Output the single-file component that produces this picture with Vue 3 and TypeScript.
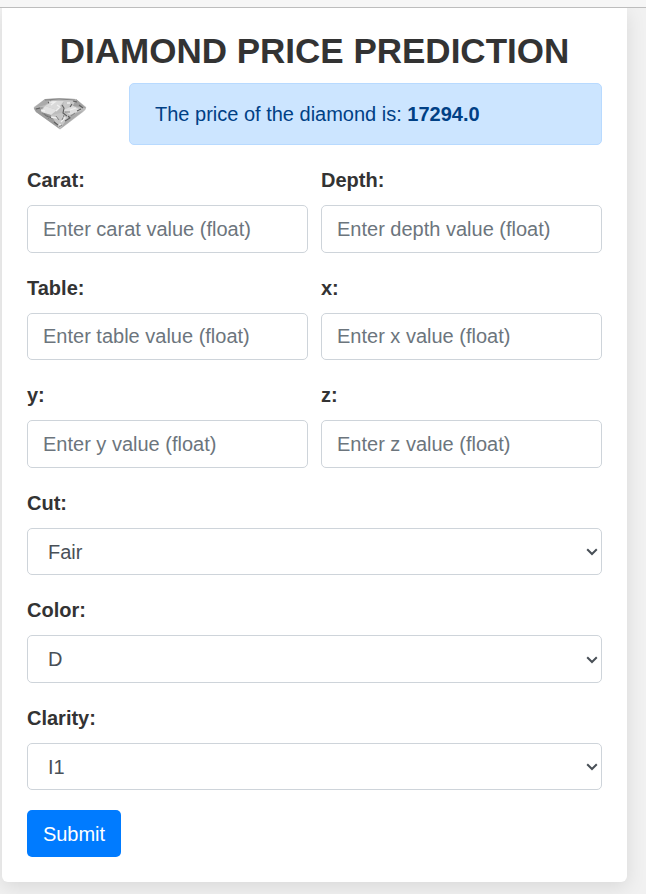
<script setup lang="ts">
import { reactive } from 'vue'

interface TextField {
  id: string
  label: string
  placeholder: string
}

interface SelectField {
  id: string
  label: string
  options: string[]
}

const textFields: TextField[] = [
  { id: 'carat', label: 'Carat:', placeholder: 'Enter carat value (float)' },
  { id: 'depth', label: 'Depth:', placeholder: 'Enter depth value (float)' },
  { id: 'table', label: 'Table:', placeholder: 'Enter table value (float)' },
  { id: 'x', label: 'x:', placeholder: 'Enter x value (float)' },
  { id: 'y', label: 'y:', placeholder: 'Enter y value (float)' },
  { id: 'z', label: 'z:', placeholder: 'Enter z value (float)' },
]

const selectFields: SelectField[] = [
  { id: 'cut', label: 'Cut:', options: ['Fair'] },
  { id: 'color', label: 'Color:', options: ['D'] },
  { id: 'clarity', label: 'Clarity:', options: ['I1'] },
]

const values = reactive<Record<string, string>>({ cut: 'Fair', color: 'D', clarity: 'I1' })
const price = '17294.0'
</script>

<template>
  <div class="page">
    <div class="topbar"></div>
    <main class="card">
      <h1>DIAMOND PRICE PREDICTION</h1>
      <div class="result">
        <svg class="diamond" viewBox="0 0 54 32" aria-hidden="true">
          <path d="M12 1 Q27 -1 43 1 L53 9 Q54 11 50 14 L27 31.5 L3 14 Q0 11 1 9Z" fill="#bcbcbc" />
          <path d="M12 1 20 2 12 7 1 10Z" fill="#aaa" />
          <path d="M20 3 31 3 24 12 12 8Z" fill="#dadada" />
          <path d="M31 3 43 1 40 8 30 12Z" fill="#c8c8c8" />
          <path d="M43 1 53 10 40 8Z" fill="#a0a0a0" />
          <path d="M12 8 24 12 18 17 8 14Z" fill="#e2e2e2" />
          <path d="M30 12 40 8 48 12 37 17Z" fill="#dedede" />
          <path d="M1 10 10 9 8 14 18 17 27 31 3 14Z" fill="#9b9b9b" />
          <path d="M18 17 28 15 37 17 27 31Z" fill="#c6c6c6" />
          <path d="M37 17 50 13 27 31Z" fill="#aaa" />
          <path d="M3 11 7 10M15 5 18 3M29 7 31 10 30 15 34 18M40 3 44 4M46 7 50 10M44 13 48 11M11 16 14 18 19 20M21 24 25 27M35 18 37 20 32 23M37 9 39 6" fill="none" stroke="#5e5e5e" stroke-width="1.1" />
          <path d="M16 4 22 4 18 7M24 7 27 9 23 13M34 5 37 5M37 12 43 10M8 12 12 13M18 19 24 20M29 19 32 20 28 24M26 26 28 27" fill="none" stroke="#f0f0f0" stroke-width="1.3" />
          <path d="M9 15 17 19 15 21M23 18 26 22M31 17 29 22M42 15 38 18M12 2 26 1 42 2M32 14 37 14M26 29 29 27" fill="none" stroke="#858585" stroke-width="1" />
        </svg>
        <div class="alert">The price of the diamond is: <strong>{{ price }}</strong></div>
      </div>
      <form @submit.prevent>
        <div class="grid">
          <div v-for="field in textFields" :key="field.id" class="group">
            <label :for="field.id">{{ field.label }}</label>
            <input :id="field.id" v-model="values[field.id]" class="control" type="text" :placeholder="field.placeholder" />
          </div>
        </div>
        <div v-for="field in selectFields" :key="field.id" class="group">
          <label :for="field.id">{{ field.label }}</label>
          <div class="select-wrap">
            <select :id="field.id" v-model="values[field.id]" class="control">
              <option v-for="option in field.options" :key="option">{{ option }}</option>
            </select>
            <svg class="chevron" viewBox="0 0 12 8" aria-hidden="true">
              <path d="M1.2 1.3 6 6 10.8 1.3" fill="none" stroke="#495057" stroke-width="2" />
            </svg>
          </div>
        </div>
        <button type="submit">Submit</button>
      </form>
    </main>
  </div>
</template>

<style>
body {
  margin: 0;
  background: #f0f0f0;
}
</style>

<style scoped>
.page,
.page * {
  box-sizing: border-box;
}
.page {
  height: 894px;
  overflow: hidden;
  background: #f1f1f1;
  color: #333;
  font: 20px/30px "Liberation Sans", Arial, sans-serif;
}
.topbar {
  position: relative;
  height: 8px;
  background: #f6f6f6;
  border-bottom: 1px solid #bdbdbd;
}
.card {
  width: 625px;
  height: 874px;
  margin-left: 2px;
  padding: 22px 25px 25px;
  background: #fff;
  border-radius: 0 0 6px 6px;
  box-shadow: 0 5px 19px rgba(0, 0, 0, 0.1);
}
h1 {
  margin: 0 0 11px;
  font-size: 35px;
  font-weight: 700;
  line-height: 42px;
  text-align: center;
  white-space: nowrap;
}
.result {
  display: flex;
  align-items: center;
  height: 62px;
  margin-bottom: 20px;
}
.diamond {
  width: 54px;
  height: 32px;
  margin: 0 42px 0 6px;
}
.alert {
  flex: 1;
  height: 62px;
  padding: 15px 25px;
  color: #004085;
  background: #cce5ff;
  border: 1px solid #b8daff;
  border-radius: 5px;
}
.grid {
  display: grid;
  grid-template-columns: 1fr 1fr;
  column-gap: 13px;
}
.group {
  margin-bottom: 20px;
}
label {
  display: block;
  margin-bottom: 10px;
  font-weight: 700;
}
.control {
  display: block;
  width: 100%;
  height: 47.5px;
  margin: 0;
  padding: 8px 15px 7px;
  font: inherit;
  color: #495057;
  background: #fff;
  border: 1px solid #ced4da;
  border-radius: 5px;
  outline: none;
}
.control::placeholder {
  color: #6c757d;
  opacity: 1;
}
.select-wrap {
  display: grid;
  align-items: center;
}
.select-wrap > * {
  grid-area: 1 / 1;
}
select.control {
  appearance: none;
  padding-left: 20px;
}
.chevron {
  width: 12px;
  height: 8px;
  margin: 2px 4px 0 0;
  justify-self: end;
  pointer-events: none;
}
button {
  display: block;
  width: 94px;
  height: 47px;
  padding: 0;
  font: inherit;
  color: #fff;
  background: #007bff;
  border: 0;
  border-radius: 5px;
}
</style>
